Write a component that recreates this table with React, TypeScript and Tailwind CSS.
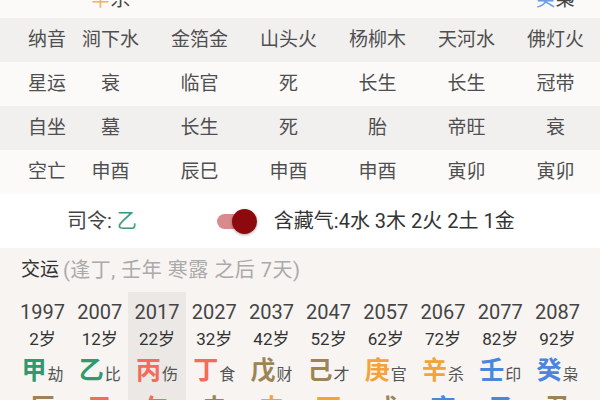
import React from "react";

const rows = [
  { label: "纳音", cells: ["涧下水", "金箔金", "山头火", "杨柳木", "天河水", "佛灯火"], gray: true },
  { label: "星运", cells: ["衰", "临官", "死", "长生", "长生", "冠带"], gray: false },
  { label: "自坐", cells: ["墓", "长生", "死", "胎", "帝旺", "衰"], gray: true },
  { label: "空亡", cells: ["申酉", "辰巳", "申酉", "申酉", "寅卯", "寅卯"], gray: false },
];

const colors: Record<string, string> = {
  wood: "text-[#2f9a6e]",
  fire: "text-[#f26b5b]",
  earth: "text-[#9c8458]",
  metal: "text-[#f4a23a]",
  water: "text-[#4a86dc]",
};

const yun = [
  { year: 1997, age: "2岁", stem: "甲", god: "劫", sc: "wood", branch: "辰", bc: "earth" },
  { year: 2007, age: "12岁", stem: "乙", god: "比", sc: "wood", branch: "巳", bc: "fire" },
  { year: 2017, age: "22岁", stem: "丙", god: "伤", sc: "fire", branch: "午", bc: "fire" },
  { year: 2027, age: "32岁", stem: "丁", god: "食", sc: "fire", branch: "未", bc: "earth" },
  { year: 2037, age: "42岁", stem: "戊", god: "财", sc: "earth", branch: "申", bc: "metal" },
  { year: 2047, age: "52岁", stem: "己", god: "才", sc: "earth", branch: "酉", bc: "metal" },
  { year: 2057, age: "62岁", stem: "庚", god: "官", sc: "metal", branch: "戌", bc: "earth" },
  { year: 2067, age: "72岁", stem: "辛", god: "杀", sc: "metal", branch: "亥", bc: "water" },
  { year: 2077, age: "82岁", stem: "壬", god: "印", sc: "water", branch: "子", bc: "water" },
  { year: 2087, age: "92岁", stem: "癸", god: "枭", sc: "water", branch: "丑", bc: "earth" },
];

const App = () => {
  return (
    <div className="w-[600px] h-[400px] overflow-hidden bg-[#fbfaf9] font-['Roboto','Noto_Sans_CJK_SC',sans-serif] text-[#4f4f4f]">
      {/* pillars table, top row scrolled mostly out of view */}
      <div className="grid grid-cols-[66px_repeat(6,89px)] -mt-[26px]">
        <div className="h-[44px]" />
        <div className="h-[44px] flex items-end justify-center pb-[9px] text-[20px] leading-none">
          <span className="text-[#f4a23a] opacity-80">辛</span>
          <span className="text-[#444]">杀</span>
        </div>
        <div />
        <div />
        <div />
        <div />
        <div className="h-[44px] flex items-end justify-center pb-[9px] text-[20px] leading-none">
          <span className="text-[#4a86dc] opacity-80">癸</span>
          <span className="text-[#444]">枭</span>
        </div>
      </div>
      {rows.map((r) => (
        <div
          key={r.label}
          className={`grid grid-cols-[66px_repeat(6,89px)] h-[44px] items-center text-[19px] ${r.gray ? "bg-[#f2f0ef]" : "bg-[#fbfaf9]"}`}
        >
          <div className="pl-[28px] whitespace-nowrap">{r.label}</div>
          {r.cells.map((c, i) => (
            <div key={i} className="text-center whitespace-nowrap">
              {c}
            </div>
          ))}
        </div>
      ))}

      {/* siling row */}
      <div className="h-[54px] flex items-center pl-[67px] text-[20px] bg-white">
        <span className="text-[#444]">
          司令:<span className="text-[#3a9b7c]"> 乙</span>
        </span>
        <div className="relative ml-[80px] w-[34px] h-[15px] rounded-full bg-[#d98a8c]">
          <div className="absolute -right-[6px] -top-[5px] w-[25px] h-[25px] rounded-full bg-[#8c0a0e] shadow-[0_1px_3px_rgba(0,0,0,0.35)]" />
        </div>
        <span className="ml-[23px] text-[#333]">含藏气:4水 3木 2火 2土 1金</span>
      </div>

      {/* dayun */}
      <div className="bg-[#f7f4f2] h-[200px]">
        <div className="h-[44px] flex items-center pl-[21px] text-[19px]">
          <span className="text-[#333]">交运</span>
          <span className="text-[#aaa] ml-[4px] text-[20px] tracking-[0.5px]">(逢丁, 壬年 寒露 之后 7天)</span>
        </div>
        <div className="grid grid-cols-10 px-[14px]">
          {yun.map((y, i) => (
            <div
              key={y.year}
              className={`flex flex-col items-center pt-[6px] h-[140px] ${i === 2 ? "bg-[#ebe8e6]" : ""}`}
            >
              <div className="h-[28px] flex items-center text-[20px] text-[#444]">{y.year}</div>
              <div className="h-[28px] flex items-center text-[17px] text-[#333]">{y.age}</div>
              <div className="h-[32px] flex items-end pb-[3px]">
                <span className={`text-[25px] font-bold leading-none ${colors[y.sc]}`}>{y.stem}</span>
                <span className="text-[16px] leading-none text-[#555] ml-[1px]">{y.god}</span>
              </div>
              <div className="h-[38px] flex items-center pt-[6px]">
                <span className={`text-[25px] font-bold leading-none ${colors[y.bc]}`}>{y.branch}</span>
              </div>
            </div>
          ))}
        </div>
      </div>
    </div>
  );
};

export default App;
